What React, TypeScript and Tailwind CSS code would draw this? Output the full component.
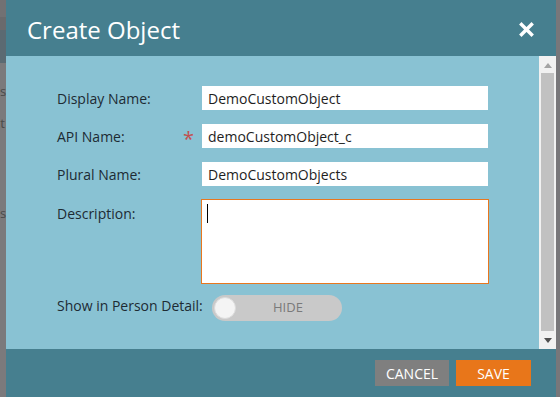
import React from 'react';

const Row: React.FC<{ label: string; required?: boolean; value: string }> = ({ label, required, value }) => (
  <div className="flex items-center h-[24px]">
    <div className="w-[145px] flex items-center justify-between pr-[8px]">
      <span>{label}</span>
      {required && <span className="text-[#c2504f] text-[20px] leading-none mt-[6px]">*</span>}
    </div>
    <div className="w-[286px] h-[24px] bg-white flex items-center px-[6px] text-[14px] text-[#1e1e1e]">{value}</div>
  </div>
);

const App: React.FC = () => {
  return (
    <div className="w-[560px] h-[397px] flex overflow-hidden" style={{ fontFamily: '"Open Sans", "Noto Sans", sans-serif' }}>
      {/* page behind the dialog */}
      <div className="w-[6px] h-full flex flex-col bg-[#7b7a7c] text-[#4a4a4a] text-[13px] overflow-hidden">
        <div className="h-[20px] bg-[#727173]" />
        <div className="h-[16px] bg-[#6a6a6c]" />
        <div className="h-[39px] bg-[#5b6a72]" />
        <div className="relative h-full">
          <span className="absolute left-[-8px] top-[19px]">us</span>
          <span className="absolute left-[-6px] top-[51px]">ct</span>
          <span className="absolute left-[-8px] top-[141px]">us</span>
        </div>
      </div>

      {/* dialog */}
      <div className="w-[550px] h-full flex flex-col">
        <div className="h-[56px] bg-[#467f8f] flex items-center justify-between pl-[21px] pr-[22px]">
          <h1 className="text-white text-[24px] leading-none mt-[3px]">Create Object</h1>
          <svg width="15" height="15" viewBox="0 0 15 15" className="mt-[3px]">
            <path d="M2.5 2.5 L12.5 12.5 M12.5 2.5 L2.5 12.5" stroke="#fff" strokeWidth="3.4" strokeLinecap="square" />
          </svg>
        </div>

        <div className="flex-1 flex bg-[#89c2d3]">
          <div className="flex-1 pl-[51px] pt-[30px] flex flex-col gap-[14px] text-[14px] text-[#1d2b33]">
            <Row label="Display Name:" value="DemoCustomObject" />
            <Row label="API Name:" required value="demoCustomObject_c" />
            <Row label="Plural Name:" value="DemoCustomObjects" />
            <div className="flex -mt-[1px]">
              <div className="w-[144px] pt-[4px]">Description:</div>
              <div className="w-[288px] h-[85px] bg-white border border-[#e8771f] px-[5px] pt-[4px]">
                <div className="w-px h-[19px] bg-black" />
              </div>
            </div>
            <div className="flex items-center -mt-[3px]">
              <div className="w-[155px] -mt-[6px]">Show in Person Detail:</div>
              <div className="w-[130px] h-[26px] rounded-full bg-[#c9c9c9] flex items-center pl-[2px]">
                <div className="w-[22px] h-[22px] rounded-full bg-[#f4f4f4] border border-[#dcdcdc]" />
                <span className="ml-[37px] text-[13px] text-[#7a7a7a]">HIDE</span>
              </div>
            </div>
          </div>

          {/* scrollbar */}
          <div className="w-[17px] bg-[#f1f1f1] flex flex-col items-center">
            <div className="h-[16px] flex items-center justify-center pt-[2px]">
              <svg width="8" height="5" viewBox="0 0 8 5"><path d="M0 5 L4 0 L8 5 Z" fill="#a3a3a3" /></svg>
            </div>
            <div className="w-[13px] flex-1 bg-[#c1c1c1] my-[1px]" />
            <div className="h-[17px] flex items-center justify-center">
              <svg width="8" height="5" viewBox="0 0 8 5"><path d="M0 0 L8 0 L4 5 Z" fill="#505050" /></svg>
            </div>
          </div>
        </div>

        <div className="h-[48px] bg-[#467f8f] flex items-center justify-end gap-[7px] pr-[25px]">
          <button className="w-[74px] h-[26px] bg-[#7f7f7f] text-white text-[14px]">CANCEL</button>
          <button className="w-[75px] h-[26px] bg-[#e8761a] text-white text-[14px]">SAVE</button>
        </div>
      </div>

      <div className="w-[4px] h-full bg-[#78777a]" />
    </div>
  );
};

export default App;
